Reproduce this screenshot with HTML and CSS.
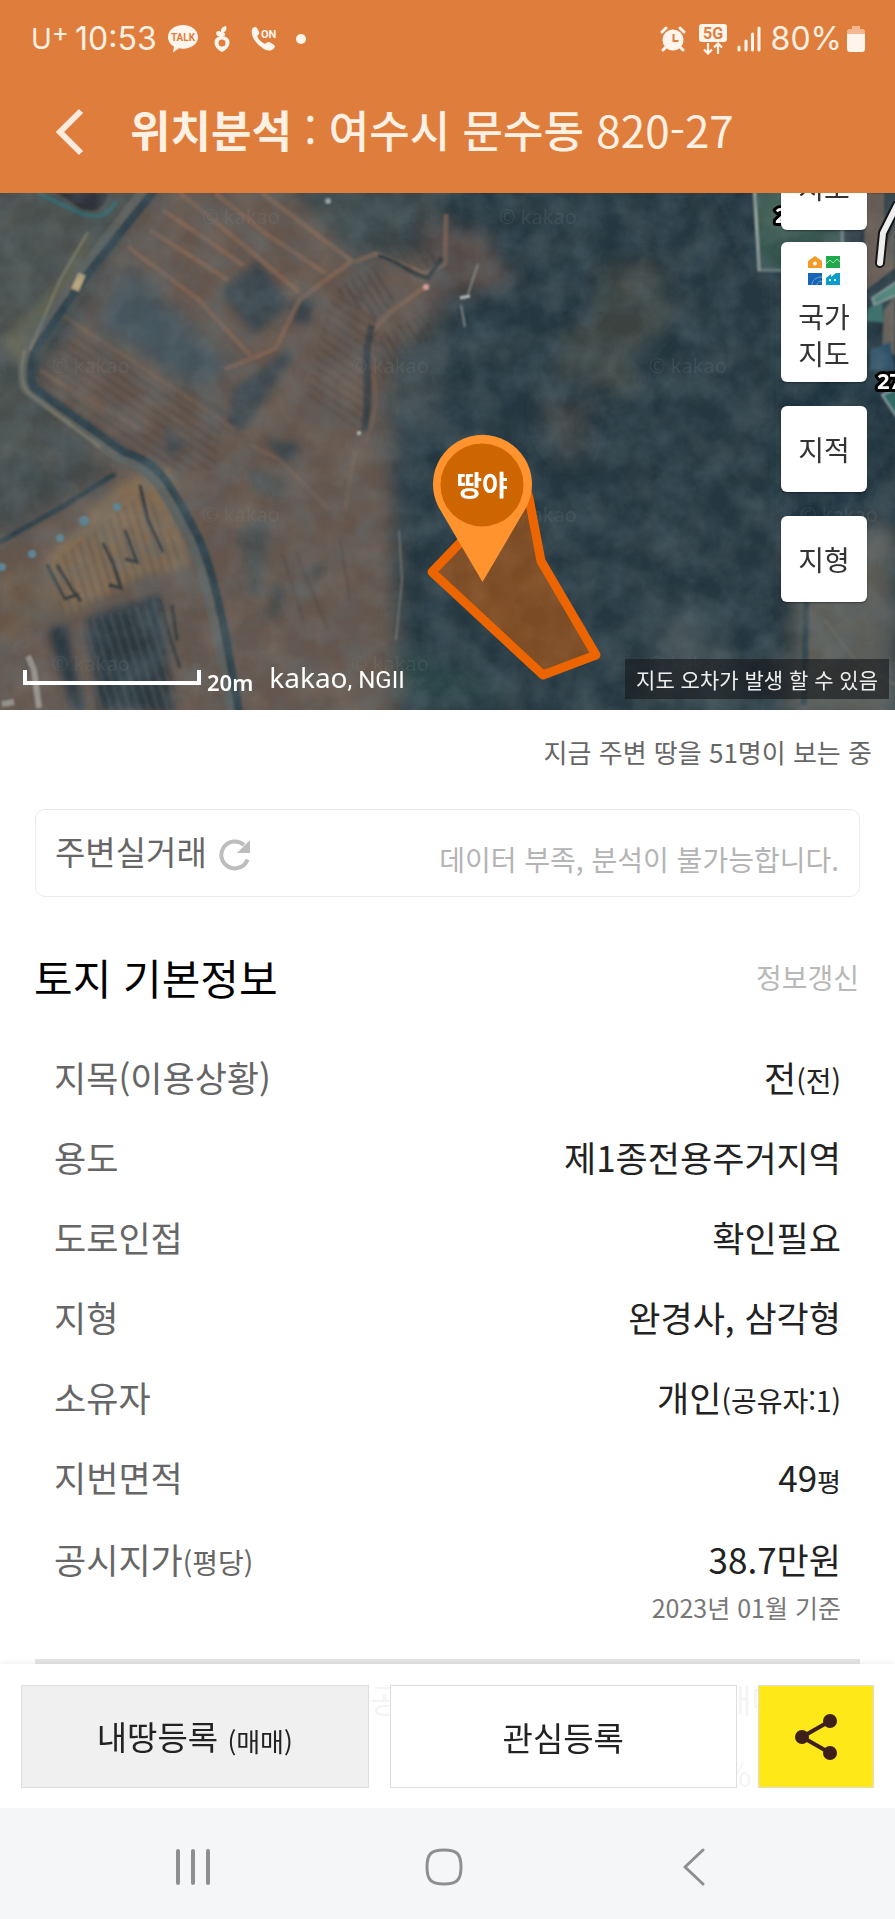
FILE: index.html
```html
<!DOCTYPE html>
<html lang="ko">
<head>
<meta charset="utf-8">
<meta name="viewport" content="width=device-width, initial-scale=1">
<title>위치분석</title>
<link rel="stylesheet" href="styles.css">
</head>
<body>
<header class="top">
  <div class="status">
    <div class="status-group">
      <span class="carrier">U<sup>+</sup></span>
      <span class="clock">10:53</span>
      <svg class="st-icon" width="32" height="30" viewBox="0 0 32 30"><path fill="#fff5ec" d="M16 1C7.500 1 1 6 1 13c0 4 2.300 7.500 6 9.600L6 28.500l6-4.200c1.300.3 2.600.4 4 .4 8.500 0 15-5 15-11.700S24.500 1 16 1z"/><text x="16" y="17" text-anchor="middle" class="talk">TALK</text></svg>
      <svg class="st-icon carrot" width="18" height="28" viewBox="0 0 18 28"><path fill="#fff5ec" fill-rule="evenodd" d="M9 11.500c4.500-.5 7.500 2 7.500 6 0 4-3.500 7.500-7.500 9.500-4-2-7.500-5.500-7.500-9.500 0-4 3-6.500 7.500-6zm0 3a3.500 3.500 0 1 0 0 7 3.500 3.500 0 0 0 0-7z"/><path fill="#fff5ec" d="M9 12C4 12 2.500 9.500 3.500 7c1.500-1.500 3.500-1 4.500 0C7.500 4 9.500 1.500 13 1c1.200 3.500-.3 5.500-2.500 6.500 1.500.3 2 1.500 1.500 2.500-.6 1.200-1.500 2-3 2z"/></svg>
      <svg class="st-icon call" width="28" height="28" viewBox="0 0 28 28"><path fill="#fff5ec" d="M2.500 3.500C4 1.500 6 1.500 7 3l2 4c.7 1.500-.5 2.500-1.500 3.500-.5.500.5 3 3 5.500 2.500 2.300 4.500 3 5.300 2.500 1.200-1.200 2.500-2 4-1.200l4 2.500c1.500 1 1.200 2.500-.5 4.200-2.500 2.500-7.500 2.500-14-3.500C2 14 .500 7 2.500 3.500z"/><text x="11" y="13" class="on">ON</text></svg>
      <i class="dot"></i>
    </div>
    <div class="status-group right">
      <svg width="26" height="26" viewBox="0 0 26 26"><circle cx="13" cy="14" r="10.500" fill="#fff5ec"/><path d="M2 6l4-4M24 6l-4-4M6 21l-3 3M20 21l3 3" stroke="#fff5ec" stroke-width="3" stroke-linecap="round"/><path d="M13.500 8v7h5" stroke="#df7e3c" stroke-width="2" fill="none"/></svg>
      <svg class="fiveg" width="28" height="31" viewBox="0 0 28 31"><rect width="28" height="18" rx="3" fill="#fff5ec"/><text x="14" y="15" text-anchor="middle" class="g5">5G</text><path d="M9 19v10M5 25.500l4 4 4-4M19 30V19.500M15 23.500l4-4 4 4" stroke="#fff5ec" stroke-width="2.200" fill="none"/></svg>
      <svg class="signal" width="24" height="26" viewBox="0 0 24 26"><path d="M2 24v-3M9 24V15M15.500 24V8M22 24V2" stroke="#fff5ec" stroke-width="3" stroke-linecap="round"/></svg>
      <span class="batt">80%</span>
      <svg width="18" height="26" viewBox="0 0 18 26"><path fill="#f3b891" d="M5 3V0h8v3h2a3 3 0 0 1 3 3v3H0V6a3 3 0 0 1 3-3z"/><path fill="#fff5ec" d="M0 8h18v15a3 3 0 0 1-3 3H3a3 3 0 0 1-3-3z"/></svg>
    </div>
  </div>
  <div class="titlebar">
    <button class="back" type="button" aria-label="뒤로"><svg width="28" height="48" viewBox="0 0 28 48"><path d="M25 3L4 24l21 21" fill="none" stroke="#ffeade" stroke-width="6"/></svg></button>
    <h1><b>위치분석</b> : <span class="place">여수시 문수동</span> 820-27</h1>
  </div>
</header>

<section class="map" aria-label="지도">
  <svg class="aerial" viewBox="0 193 895 517" preserveAspectRatio="xMidYMid slice">
    <defs>
      <filter id="b12" x="-20%" y="-20%" width="140%" height="140%"><feGaussianBlur stdDeviation="10"/></filter>
      <filter id="b5" x="-20%" y="-20%" width="140%" height="140%"><feGaussianBlur stdDeviation="4"/></filter>
      <filter id="b1" x="-20%" y="-20%" width="140%" height="140%"><feGaussianBlur stdDeviation="1.200"/></filter>
      <filter id="noise" x="0" y="0" width="100%" height="100%"><feTurbulence type="fractalNoise" baseFrequency="0.035" numOctaves="5" seed="8"/><feColorMatrix values="0 0 0 0 0.1  0 0 0 0 0.16  0 0 0 0 0.2  1.300 0 0 0 -0.450"/></filter>
      <filter id="light" x="0" y="0" width="100%" height="100%"><feTurbulence type="fractalNoise" baseFrequency="0.03" numOctaves="5" seed="21"/><feColorMatrix values="0 0 0 0 0.46  0 0 0 0 0.47  0 0 0 0 0.42  0 1.300 0 0 -0.450"/></filter>
      <pattern id="furrow" width="9" height="9" patternUnits="userSpaceOnUse" patternTransform="rotate(34)"><path d="M0 2h9" stroke="#4c4745" stroke-width="3"/></pattern>
      <pattern id="furrow2" width="8" height="8" patternUnits="userSpaceOnUse" patternTransform="rotate(58)"><path d="M0 2h8" stroke="#403f3f" stroke-width="3"/></pattern>
      <pattern id="rows" width="9" height="9" patternUnits="userSpaceOnUse" patternTransform="rotate(73)"><path d="M0 2h9" stroke="#5b5650" stroke-width="3"/></pattern>
    </defs>
    <rect y="193" width="895" height="517" fill="#253740"/>
    <g filter="url(#b12)">
      <path fill="#4a504d" d="M-20 180H170L20 370l20 40 90 55-150 90z"/>
      <path fill="#65564d" d="M160 180H280l75 80 80-10 15 50-60 60 10 380H-20V540l140-70-90-80z"/>
      <path fill="#3b474a" d="M275 180H445v50l-90 25z"/>
      <path fill="#45525a" d="M125 260l110 105-35 30-110-70z"/>
      <path fill="#3b464c" d="M450 310l-60 50-8 80 60-5z"/>
      <path fill="#564a44" d="M425 220l60 15 30 50-60 10-35 30z"/>
      <path fill="#444642" d="M600 265l60-5 10 60-50 50-30-20zM620 300l20 100-90 -30 20-40z" opacity=".75"/>
      <path fill="#3c4040" d="M540 400l50 5-10 60-30-20z"/>
      <path fill="#37464d" d="M640 610l60-10 60 110H650z"/>
      <path fill="#5c5c56" d="M795 520l100 10V720H780l15-90z"/>
      <path fill="#1e313c" d="M720 180h40l25 120v240l60 10 50-150v-40l-110-80z"/>
      <path fill="#2c4446" d="M390 640l130 60H395z"/>
      <path fill="#434849" d="M0 440l120 30-120 70z"/>
    </g>
    <g filter="url(#b5)">
      <path fill="#3a454b" d="M220 290l38-30 32 45-35 30zM232 390l55-40 6 6-42 65-20 0zM292 300l22 0-4 25-18-2zM228 412l22-4-2 20-20-1zM265 440l40 5-20 18zM165 425l20 20-15 15z"/>
      <path fill="#8b7154" opacity=".75" d="M45 562l70-77 55-20 20 100-55 15-75 40z"/>
      <path fill="#2c3841" d="M85 618l75-24 15 118H98zM48 630l18-8 20 90H72z"/>
      <path fill="#6d5846" opacity=".6" d="M0 570l50-5 20 50-70 30z"/>
      <path fill="#3f494d" opacity=".7" d="M250 470l40 10-10 20-30-10zM275 580l10 10-5 30-14-5zM235 530l35-10-10 80-10-8zM310 565l14-4 0 18-14 0z"/>
      <path fill="#666553" opacity=".8" d="M0 340l60-60 30-50-10 60-60 80z"/>
    </g>
    <g opacity=".45" filter="url(#b1)">
      <path fill="url(#furrow)" d="M60 325l165 85-10 60-70 0-110-80zM330 300l40-20 10 70-15 85-60-40z"/>
      <path fill="url(#furrow2)" d="M370 240l50-20 20 45-20 15zM335 290l40-25 20 35-20 20zM380 335l50-25 5 60-55 10z"/>
      <path fill="url(#rows)" d="M45 570l100-80 45 80-130 50zM85 620l75-20 15 112H95zM150 600l40-10 30 110h-60z"/>
    </g>
    <g fill="none" stroke="#866551" stroke-width="5" opacity=".7" filter="url(#b1)">
      <path d="M128 247l70 52 52 56M150 230l78 50M163 210l80 55M180 193l55 45 65 55M215 193l50 40 60 40M262 193l90 68-52 38-25 50-50 20M355 262l20-8 50 20 20-10 1-50M425 287l-35 25-20 22"/>
      <path d="M370 334l6 70-10 40M55 310l120 80 60 40M40 370l100 60M250 445l30 15 50 50M355 450l-10 60" opacity=".5"/>
    </g>
    <path d="M378 256c20 4 35 20 50 22l14-20" fill="none" stroke="#2c3439" stroke-width="4" filter="url(#b1)"/>
    <g fill="none" filter="url(#b1)">
      <path stroke="#5b5f5b" stroke-width="13" d="M150 185l-70 90-50 70c-8 22-7 38-2 44l90 66c40 12 50 40 74 85 18 40 28 100 42 180"/>
      <path stroke="#2f4049" stroke-width="8" d="M156 188l-70 88-50 72c-8 20-6 34-2 40l90 64c40 12 50 40 74 85 18 40 28 100 42 180"/>
      <path stroke="#2f3f46" stroke-width="5" d="M0 542l65-37 50-31"/>
      <path stroke="#8b836b" stroke-width="3" opacity=".6" d="M88 232l-28 48-30 70M80 275l-4 14M25 350c-6 22-3 38 5 44l70 53"/>
      <path stroke="#b8a67e" stroke-width="8" d="M82 274l-7 16"/>
      <path fill="#2f3337" d="M58 193l22 15c15 6 24 2 28-15z"/>
      <path stroke="#31666d" stroke-width="4" d="M38 193l42 20c20 7 30 1 36-12"/>
      <path stroke="#2b383e" stroke-width="7" d="M372 325l-5 25 0 60-3 20" opacity=".7"/>
      <path stroke="#343a3d" stroke-width="3" d="M47 565l18 34 14-5M57 565l16 26 8 10M103 543l10 20 8 25-12-3M125 530l12 32-12-3M140 485l8 35 15 32M160 600l10 38 10 30M172 605l5 35"/>
      <path stroke="#4f453d" stroke-width="2" d="M283 555l20 65M296 552l32 78M340 540l10 60" opacity=".6"/>
      <path stroke="#8a8a76" stroke-width="2" d="M399 530l3 50-6 60" opacity=".6"/>
    </g>
    <g fill="#5a8798" filter="url(#b1)"><circle cx="32" cy="554" r="4"/><circle cx="60" cy="538" r="4"/><circle cx="84" cy="521" r="5"/><circle cx="117" cy="507" r="4"/><circle cx="2" cy="567" r="4"/></g>
    <g fill="none" stroke="#c8c4ba" stroke-width="3" filter="url(#b1)"><path d="M28 656l6 14 5 38M2 704l12-2" stroke-width="6" opacity=".6"/><path d="M460 298l10-2" stroke="#c3c7c2"/><path d="M461 305l4 22M468 294l10-30" stroke="#7f8582" stroke-width="2"/></g>
    <g filter="url(#b1)"><circle cx="426" cy="287" r="3" fill="#f0a0a0"/><circle cx="359" cy="433" r="2" fill="#ccd1cb"/><circle cx="328" cy="201" r="3" fill="#9da7a5"/></g>
    <g filter="url(#b1)">
      <path fill="#39594f" stroke="#9eaaa5" stroke-width="3" d="M754 185l5 85 83 2V185z"/>
      <path fill="#304e4d" d="M760 246l82-20v46h-82z" opacity=".5"/>
      <path fill="#35434a" d="M845 190h15v60h-15z"/>
      <path fill="#665c55" d="M865 193h30v75l-32 25z"/>
      <path fill="#35434a" d="M884 193h11v30l-11 30z"/>
      <path fill="#4b8c7c" stroke="#91a69f" stroke-width="2" d="M872 298l30-20v15l-28 12z"/>
      <path fill="#346f68" d="M868 308l14-5 2 20-18-2z"/>
      <path fill="#66605a" d="M884 310l11-14v60l-13-12z"/>
      <path fill="#2c5068" d="M870 350l20-8 5 28-25 0z"/>
      <path fill="#286660" stroke="#9aa" stroke-width="2" d="M882 395l20 30v-40z"/>
      <path stroke="#30424a" stroke-width="6" fill="none" d="M806 600l-2 105"/>
      <path stroke="#6c6b60" stroke-width="3" fill="none" d="M825 620l30 40 40 25" opacity=".6"/>
    </g>
    <rect y="193" width="895" height="517" filter="url(#light)" opacity=".24"/>
    <rect y="193" width="895" height="517" filter="url(#noise)" opacity=".5"/>
    <g class="watermark">
      <text x="202" y="224">© kakao</text><text x="499" y="224">© kakao</text>
      <text x="52" y="373">© kakao</text><text x="351" y="373">© kakao</text><text x="649" y="373">© kakao</text>
      <text x="202" y="522">© kakao</text><text x="499" y="522">© kakao</text><text x="800" y="522">© kakao</text>
      <text x="52" y="671">© kakao</text><text x="351" y="671">© kakao</text><text x="649" y="671">© kakao</text>
    </g>
    <g class="lot"><text x="877" y="389">27</text><text x="775" y="223">2</text></g>
    <path d="M897 205l-14 28-3 30" fill="none" stroke="#151515" stroke-width="10" stroke-linecap="round"/>
    <path d="M897 205l-14 28-3 30" fill="none" stroke="#eee" stroke-width="6" stroke-linecap="round"/>
    <path d="M522 478l7 20 12 63 55 94-53 20-111-103z" fill="#d2600a" fill-opacity=".5" stroke="#ec6500" stroke-width="9" stroke-linejoin="round"/>
    <path fill="#ff942f" d="M482.500 582l-44-75a49.500 49.500 0 1 1 88 0z"/>
    <circle cx="482" cy="485" r="41.500" fill="#cd6500"/>
    <text class="pin-text" x="482" y="496" text-anchor="middle">땅야</text>
  </svg>
  <div class="map-tools">
    <button type="button" class="tool first">지도</button>
    <button type="button" class="tool national">
      <svg width="32" height="30" viewBox="0 0 32 30"><path fill="#f59a26" fill-rule="evenodd" d="M7 0l7 5v7H0V5zm0 5.500a2 2 0 1 0 0 4 2 2 0 0 0 0-4z"/><path fill="#20a84c" d="M18 0h14v12H18z"/><path d="M18 8l4-4 3 3 4-4 3 3" fill="none" stroke="#9fdfad" stroke-width="1"/><path fill="#1764b4" d="M0 17h14v12H0z"/><path d="M4 29c0-5 4-8 10-8M9 29c0-2 2-4 5-4" fill="none" stroke="#6aa5dc"/><path fill="#0c9dcb" d="M18 22l5-4v3l5-4h4v12H18z"/><path fill="#d9f2fa" d="M21 23h2v2h-2zM26 23h2v2h-2z"/></svg>
      <span>국가<br>지도</span>
    </button>
    <button type="button" class="tool">지적</button>
    <button type="button" class="tool">지형</button>
  </div>
  <div class="map-credit"><i class="scale"></i><span class="dist">20m</span><span class="brand">kakao<span class="src">, NGII</span></span></div>
  <p class="map-note">지도 오차가 발생 할 수 있음</p>
</section>

<main>
  <p class="viewers">지금 주변 땅을 51명이 보는 중</p>
  <section class="deals">
    <h2>주변실거래</h2>
    <button type="button" class="reload" aria-label="새로고침"><svg width="32" height="32" viewBox="0 0 32 32"><path d="M28.500 20.500A13.500 13.500 0 1 1 25 6" fill="none" stroke="#bdbdbd" stroke-width="4"/><path fill="#bdbdbd" d="M31 1v13H18z"/></svg></button>
    <p>데이터 부족, 분석이 불가능합니다.</p>
  </section>
  <section class="land">
    <div class="land-head"><h2>토지 기본정보</h2><button type="button">정보갱신</button></div>
    <dl>
      <div><dt>지목(이용상황)</dt><dd>전<small>(전)</small></dd></div>
      <div><dt>용도</dt><dd>제1종전용주거지역</dd></div>
      <div><dt>도로인접</dt><dd>확인필요</dd></div>
      <div><dt>지형</dt><dd>완경사, 삼각형</dd></div>
      <div><dt>소유자</dt><dd>개인<small>(공유자:1)</small></dd></div>
      <div><dt>지번면적</dt><dd>49<small class="unit">평</small></dd></div>
      <div><dt>공시지가<small>(평당)</small></dt><dd>38.7만원<span class="date">2023년 01월 기준</span></dd></div>
    </dl>
  </section>
  <section class="next"><span>공</span><span>매매</span><span class="rate">%</span></section>
</main>

<footer class="dock">
  <div class="actions">
    <button type="button" class="act mine">내땅등록 <small>(매매)</small></button>
    <button type="button" class="act">관심등록</button>
    <button type="button" class="act share" aria-label="공유"><svg width="44" height="48" viewBox="0 0 44 48"><path d="M36 8L8 24l28 16" fill="none" stroke="#3d1f1c" stroke-width="4"/><g fill="#3d1f1c"><circle cx="36" cy="8" r="7"/><circle cx="8" cy="24" r="7"/><circle cx="36" cy="40" r="7"/></g></svg></button>
  </div>
  <nav class="sysnav">
    <button type="button" aria-label="최근"><svg width="38" height="38" viewBox="0 0 38 38"><path d="M4 3v32M19 3v32M34 3v32" stroke="#8f8f8f" stroke-width="4" stroke-linecap="round"/></svg></button>
    <button type="button" aria-label="홈"><svg width="38" height="38" viewBox="0 0 38 38"><path d="M19 2c13 0 17 4 17 17s-4 17-17 17S2 32 2 19 6 2 19 2z" fill="none" stroke="#8f8f8f" stroke-width="3"/></svg></button>
    <button type="button" aria-label="뒤로"><svg width="38" height="38" viewBox="0 0 38 38"><path d="M28 2L10 19l18 17" fill="none" stroke="#8f8f8f" stroke-width="3" stroke-linecap="round" stroke-linejoin="round"/></svg></button>
  </nav>
</footer>
</body>
</html>
```
FILE: styles.css
```css
* { box-sizing: border-box; }
body { margin: 0; background: #fff; color: #222; font-family: "Noto Sans CJK KR", sans-serif; }
h1, h2, p, dl, dd { margin: 0; font-weight: 400; }
button { padding: 0; border: 0; background: none; font: inherit; color: inherit; }
svg { display: block; flex: none; }

.top { background: #df7e3c; color: #fff0e4; }
.status { display: flex; justify-content: space-between; align-items: center; height: 78px; padding: 0 30px 0 31px; font: 32px/40px Inter, sans-serif; }
.status-group { display: flex; align-items: center; }
.carrier { font-size: 28px; font-weight: 400; display: flex; align-items: center; margin-right: 6px; }
.carrier sup { font-size: 26px; line-height: 26px; margin-top: -14px; }
.clock { margin-right: 10px; }
.talk { font: bold 10px Roboto, sans-serif; fill: #df7e3c; }
.carrot { margin-left: 14px; }
.call { margin-left: 19px; }
.on { font: bold 11px Roboto, sans-serif; fill: #fff5ec; }
.dot { width: 10px; height: 10px; border-radius: 50%; background: #fff5ec; margin-left: 18px; }
.fiveg { margin-left: 13px; }
.g5 { font: bold 16px Roboto, sans-serif; fill: #df7e3c; }
.signal { margin: 0 10px; }
.batt { margin-right: 5px; }
.titlebar { display: flex; align-items: center; height: 115px; padding: 0 56px 8px; }
.back { margin-right: 46px; }
.titlebar h1 { font-size: 44px; line-height: 60px; padding-bottom: 6px; white-space: nowrap; }
.place { font-weight: 500; }

.map { position: relative; height: 517px; overflow: hidden; }
.aerial { width: 100%; height: 100%; }
.watermark { font: 20px "Noto Sans", sans-serif; fill: #8b9296; fill-opacity: .16; }
.lot { font: bold 22px "Noto Sans", sans-serif; fill: #fff; stroke: #000; stroke-width: 6px; paint-order: stroke; stroke-linejoin: round; }
.pin-text { font: bold 28px "Noto Sans CJK KR", sans-serif; fill: #fff; }
.map-tools { position: absolute; top: -49px; right: 28px; width: 86px; display: flex; flex-direction: column; gap: 24px; }
.tool { height: 86px; border-radius: 6px; background: #fff; color: #333; font-size: 28px; line-height: 37px; box-shadow: 0 1px 2px rgba(0, 0, 0, .4); }
.first { margin-bottom: -12px; }
.national { height: 140px; display: flex; flex-direction: column; align-items: center; justify-content: center; gap: 12px; padding-top: 4px; }
.map-credit { position: absolute; left: 23px; bottom: 12px; display: flex; align-items: center; color: #fff; font-family: "Noto Sans", sans-serif; }
.scale { width: 178px; height: 15px; border: solid #fff; border-width: 0 4px 4px; }
.dist { margin: 10px 16px 0 6px; font-size: 22px; line-height: 32px; font-weight: 600; }
.brand { font-size: 28px; line-height: 40px; }
.src { font: 24px Roboto, sans-serif; }
.map-note { position: absolute; right: 6px; bottom: 11px; padding: 0 11px; background: rgba(25, 28, 30, .65); color: #eee; font-size: 21px; line-height: 40px; }

.viewers { padding: 22px 23px 37px; text-align: right; color: #666; font-size: 26px; line-height: 40px; }
.deals { display: flex; align-items: center; height: 88px; margin: 0 35px; padding: 0 20px 0 19px; border: 1px solid #eaeaea; border-radius: 10px; }
.deals h2 { font-size: 33px; line-height: 48px; padding-bottom: 4px; color: #666; }
.reload { margin: 4px 0 0 12px; }
.deals p { margin-left: auto; padding-top: 12px; font-size: 28px; line-height: 40px; color: #b4b4b4; }
.land-head { display: flex; justify-content: space-between; align-items: center; padding: 50px 36px 42px 34px; }
.land-head h2 { font-size: 42px; line-height: 60px; color: #000; }
.land-head button { font-size: 28px; line-height: 40px; color: #b8b8b8; }
dl { margin: 0 35px; padding: 0 19px 32px; display: grid; gap: 24px; border-bottom: 6px solid #e5e5e5; }
dl > div { display: flex; justify-content: space-between; font-size: 35px; line-height: 56px; }
dl > div:last-child { padding-top: 2px; }
dt { color: #666; }
dd { color: #222; text-align: right; }
dl small { font-size: 28px; line-height: 40px; }
dl .unit { font-size: 26px; }
.date { display: block; font-size: 25px; line-height: 40px; color: #777; }
.next { display: grid; grid-template-columns: 346px 1fr; padding: 10px 35px 0; font-size: 33px; line-height: 48px; color: #666; }
.next span { padding-left: 335px; }
.next span + span { padding-left: 340px; }
.next .rate { grid-column: 2; padding-top: 26px; }

.dock { position: fixed; left: 0; right: 0; bottom: 0; }
.actions { display: flex; gap: 21px; padding: 21px 21px 20px; background: rgba(255, 255, 255, .93); box-shadow: 0 -2px 6px rgba(0, 0, 0, .06); }
.act { flex: 1; height: 103px; border: 1px solid #dcdee1; background: #fff; font-size: 33px; line-height: 48px; color: #222; }
.act small { font-size: 26px; line-height: 40px; vertical-align: -2px; }
.mine { background: #f0f0f1; }
.share { flex: 0 0 116px; display: flex; align-items: center; justify-content: center; background: #ffe817; }
.sysnav { display: flex; align-items: center; justify-content: space-between; height: 111px; padding: 6px 182px 0 174px; background: #f5f6f8; }
```
